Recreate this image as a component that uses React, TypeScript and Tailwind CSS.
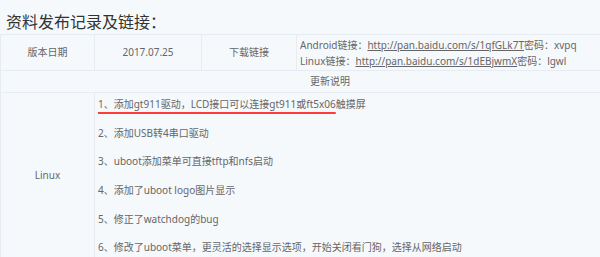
import React from "react";

const font = { fontFamily: '"Noto Sans", "Noto Sans CJK SC", sans-serif' };

const items = [
  "2、添加USB转4串口驱动",
  "3、uboot添加菜单可直接tftp和nfs启动",
  "4、添加了uboot logo图片显示",
  "5、修正了watchdog的bug",
  "6、修改了uboot菜单，更灵活的选择显示选项，开始关闭看门狗，选择从网络启动",
];

export default function App() {
  return (
    <div className="w-[600px] h-[257px] overflow-hidden bg-[#f5f9fc]" style={font}>
      <h2 className="pl-[6px] pt-[12px] h-[34px] text-[16px] leading-[20px] text-[#333]">
        资料发布记录及链接：
      </h2>
      <table className="w-[660px] border-collapse table-fixed text-[10px] text-[#666]">
        <colgroup>
          <col className="w-[94px]" />
          <col className="w-[107px]" />
          <col className="w-[95px]" />
          <col />
        </colgroup>
        <tbody>
          <tr className="h-[36px]">
            <td className="border border-[#e6ecf1] text-center">版本日期</td>
            <td className="border border-[#e6ecf1] text-center">2017.07.25</td>
            <td className="border border-[#e6ecf1] text-center">下载链接</td>
            <td className="border border-[#e6ecf1] px-[3px] leading-[16px]">
              <div>
                Android链接：<span className="underline">http://pan.baidu.com/s/1qfGLk7T</span>密码：xvpq
              </div>
              <div>
                Linux链接：<span className="underline">http://pan.baidu.com/s/1dEBjwmX</span>密码：lgwl
              </div>
            </td>
          </tr>
          <tr className="h-[22px]">
            <td colSpan={4} className="border border-[#e6ecf1] text-center">
              更新说明
            </td>
          </tr>
          <tr>
            <td className="border border-[#e6ecf1] text-center">Linux</td>
            <td colSpan={3} className="border border-[#e6ecf1] px-[3px] pt-[3px] pb-[2px] align-top">
              <div className="flex flex-col gap-[12.7px] leading-[16px]">
                <p>
                  <span className="underline decoration-[#ff3b3b] decoration-[1.5px] underline-offset-[4px]">
                    1、添加gt911驱动，LCD接口可以连接gt911或ft5x06
                  </span>
                  触摸屏
                </p>
                {items.map((t) => (
                  <p key={t}>{t}</p>
                ))}
              </div>
            </td>
          </tr>
        </tbody>
      </table>
    </div>
  );
}
